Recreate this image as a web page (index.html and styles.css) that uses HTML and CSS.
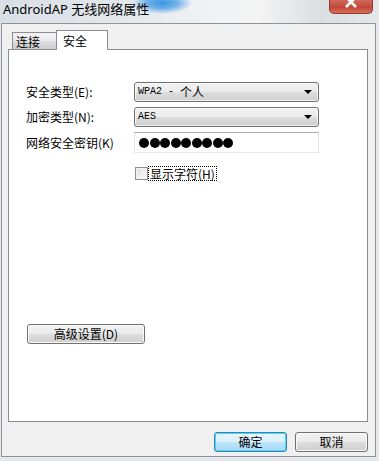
FILE: index.html
```html
<!DOCTYPE html>
<html lang="zh-CN">
<head>
<meta charset="utf-8">
<title>AndroidAP 无线网络属性</title>
<link rel="stylesheet" href="styles.css">
</head>
<body>
<div class="window">
  <div class="titlebar">
    <span class="title">AndroidAP 无线网络属性</span>
    <span class="close">
      <svg width="14" height="9" viewBox="0 0 14 9"><path d="M2 -3 L12 7 M12 -3 L2 7" stroke="#fff" stroke-width="2.6" fill="none"/></svg>
    </span>
  </div>
  <div class="client">
    <div class="tabs">
      <div class="tab">连接</div>
      <div class="tab active">安全</div>
    </div>
    <div class="panel">
      <div class="form">
        <div class="row">
          <span class="label">安全类型(E):</span>
          <div class="select"><span class="lat">WPA2 - </span>个人<span class="arrow"></span></div>
        </div>
        <div class="row">
          <span class="label">加密类型(N):</span>
          <div class="select"><span class="lat">AES</span><span class="arrow"></span></div>
        </div>
        <div class="row">
          <span class="label">网络安全密钥(K)</span>
          <div class="input"><span class="dot"></span><span class="dot"></span><span class="dot"></span><span class="dot"></span><span class="dot"></span><span class="dot"></span><span class="dot"></span><span class="dot"></span><span class="dot"></span></div>
        </div>
        <div class="check-row">
          <span class="checkbox"></span>
          <span class="check-label">显示字符(H)</span>
        </div>
      </div>
      <button class="btn adv">高级设置(D)</button>
    </div>
    <div class="actions">
      <button class="btn default">确定</button>
      <button class="btn">取消</button>
    </div>
  </div>
</div>
</body>
</html>
```

FILE: styles.css
```css
html, body {
  margin: 0;
  padding: 0;
}
body {
  width: 379px;
  height: 461px;
  overflow: hidden;
  background: #e4e8ec;
  font-family: "Noto Sans CJK SC", sans-serif;
  font-size: 12px;
  color: #000;
}
.window {
  display: flex;
  flex-direction: column;
  width: 379px;
  height: 461px;
}
.titlebar {
  height: 23px;
  flex: none;
  display: flex;
  align-items: flex-start;
  background:
    radial-gradient(ellipse 30px 11px at 162px 3px, #3a98e2 0%, rgba(70,155,228,0.75) 50%, rgba(200,222,242,0) 100%),
    linear-gradient(90deg, #d9dfe6 0%, #e2e7ec 30%, #eef1f4 52%, #f4f4f4 68%, #dcdfe2 84%, #e4e7ea 100%);
}
.title {
  font-family: "Noto Sans", "Noto Sans CJK SC", sans-serif;
  font-size: 13px;
  line-height: 17px;
  margin: 1px 0 0 3px;
  color: #000;
}
.close {
  margin-left: auto;
  margin-right: 6px;
  width: 44px;
  height: 14px;
  box-sizing: border-box;
  border: 1px solid #8c3b33;
  border-top: none;
  border-radius: 0 0 5px 5px;
  background: linear-gradient(#cf6a5a 0%, #c4473b 55%, #d86f5b 100%);
  display: flex;
  justify-content: center;
  align-items: flex-start;
}
.client {
  margin: 0 3px 0 1px;
  height: 434px;
  box-sizing: border-box;
  border: 1px solid #8f9297;
  background: #f0f0f0;
  padding: 6px 7px 4px 6px;
  display: flex;
  flex-direction: column;
}
.tabs {
  display: flex;
  align-items: flex-start;
  height: 19px;
  padding-left: 4px;
  position: relative;
  z-index: 1;
}
.tab {
  box-sizing: border-box;
  height: 17px;
  width: 45px;
  margin-top: 2px;
  border: 1px solid #898c95;
  border-bottom: none;
  padding: 1px 0 0 3px;
  line-height: 15px;
  background: linear-gradient(#f3f3f3 0%, #ebebeb 50%, #dddddd 51%, #cfcfcf 100%);
}
.tab.active {
  width: 52px;
  height: 20px;
  margin-top: 0;
  margin-left: -1px;
  padding: 2px 0 0 6px;
  background: #fff;
}
.panel {
  box-sizing: border-box;
  height: 373px;
  border: 1px solid #898c95;
  background: #fff;
  padding: 32px 0 77px 17px;
  display: flex;
  flex-direction: column;
}
.form {
  display: flex;
  flex-direction: column;
  gap: 5px;
}
.row {
  display: flex;
  align-items: center;
}
.label {
  width: 108px;
  line-height: 16px;
}
.select {
  box-sizing: border-box;
  width: 185px;
  height: 20px;
  border: 1px solid #707070;
  border-radius: 3px;
  background: linear-gradient(#f2f2f2 0%, #ebebeb 50%, #dddddd 51%, #cfcfcf 100%);
  box-shadow: inset 0 0 0 1px rgba(255,255,255,0.7);
  display: flex;
  align-items: center;
  padding-left: 3px;
  line-height: 16px;
  position: relative;
}
.lat {
  font-family: "Liberation Mono", monospace;
  font-size: 10px;
  white-space: pre;
}
.arrow {
  margin-left: auto;
  margin-right: 6px;
  width: 0;
  height: 0;
  border-left: 4px solid transparent;
  border-right: 4px solid transparent;
  border-top: 4px solid #000;
}
.input {
  box-sizing: border-box;
  width: 185px;
  height: 21px;
  border: 1px solid #e2e3ea;
  border-top-color: #abadb3;
  border-bottom-color: #e3e9ef;
  background: #fff;
  display: flex;
  align-items: center;
  padding-left: 4px;
}
.dot {
  width: 10px;
  height: 10px;
  border-radius: 50%;
  background: #000;
  margin-right: 0.5px;
}
.check-row {
  display: flex;
  align-items: center;
  margin-top: 8px;
  padding-left: 109px;
}
.checkbox {
  box-sizing: border-box;
  width: 13px;
  height: 13px;
  border: 1px solid #8e8f8f;
  background: linear-gradient(135deg, #dcdcdc 0%, #f4f4f4 70%, #fff 100%);
  box-shadow: inset 0 0 0 1px #f4f4f4;
}
.check-label {
  box-sizing: border-box;
  height: 15px;
  border: 1px dotted #000;
  padding: 0 1px 0 1px;
  line-height: 13px;
}
.btn {
  box-sizing: border-box;
  font-family: "Noto Sans CJK SC", sans-serif;
  font-size: 12px;
  color: #000;
  height: 20px;
  padding: 0;
  line-height: 16px;
  border: 1px solid #707070;
  border-radius: 3px;
  background: linear-gradient(#f2f2f2 0%, #ebebeb 50%, #dddddd 51%, #cfcfcf 100%);
  box-shadow: inset 0 0 0 1px #fbfbfb;
}
.adv {
  margin-top: auto;
  margin-left: 1px;
  width: 118px;
}
.actions {
  display: flex;
  justify-content: flex-end;
  gap: 8px;
  margin-top: 10px;
}
.actions .btn {
  width: 73px;
}
.btn.default {
  border-color: #3c7fb1;
  background: linear-gradient(#eaf6fd 0%, #d9f0fc 50%, #bee6fd 51%, #a7d9f5 100%);
  box-shadow: inset 0 0 0 1px #48d8fb;
}
```
